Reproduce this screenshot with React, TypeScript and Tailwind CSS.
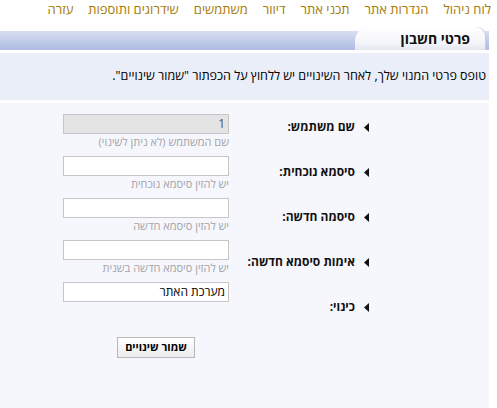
import React from 'react';

const navItems = ['לוח ניהול', 'הגדרות אתר', 'תכני אתר', 'דיוור', 'משתמשים', 'שידרוגים ותוספות', 'עזרה'];

const labels = ['שם משתמש:', 'סיסמא נוכחית:', 'סיסמה חדשה:', 'אימות סיסמא חדשה:', 'כינוי:'];

interface Field {
  value: string;
  hint?: string;
  disabled?: boolean;
}

const fields: Field[] = [
  { value: '1', hint: 'שם המשתמש (לא ניתן לשינוי)', disabled: true },
  { value: '', hint: 'יש להזין סיסמא נוכחית' },
  { value: '', hint: 'יש להזין סיסמא חדשה' },
  { value: '', hint: 'יש להזין סיסמא חדשה בשנית' },
  { value: 'מערכת האתר' },
];

const Arrow = () => (
  <svg width="5" height="9" viewBox="0 0 5 9" className="shrink-0">
    <polygon points="5,0 5,9 0,4.5" fill="#111" />
  </svg>
);

const App: React.FC = () => {
  return (
    <div dir="rtl" className="w-[497px] h-[408px] overflow-hidden bg-white font-['Open_Sans',Arial,sans-serif]">
      {/* Top menu */}
      <div className="flex h-[20px] items-center gap-[15px] pr-[6px] text-[13px] text-[#a67a06]">
        {navItems.map((item) => (
          <span key={item} className="whitespace-nowrap">{item}</span>
        ))}
      </div>

      <div className="mr-auto w-[489px]">
        {/* Page title bar */}
        <div className="mt-[7px] flex h-[23px] pr-[3px] bg-[linear-gradient(to_bottom,transparent_0,transparent_4px,#d8def2_4px,#c5cfeb_12px,#aebbe2_23px)]">
          <div className="flex w-[131px] items-center rounded-tl-[14px] rounded-tr-[9px] bg-[linear-gradient(to_bottom,#ffffff,#f4f5f9_70%,#e3e6ef)] pr-[16px] shadow-[inset_-1px_0_0_#c3cbe6]">
            <span className="text-[14px] font-bold text-[#111]">פרטי חשבון</span>
          </div>
        </div>

        {/* Intro */}
        <div className="mt-[3px] flex h-[47px] items-center bg-[#eaeef8] pr-[3px] text-[12.5px] text-black">
          טופס פרטי המנוי שלך, לאחר השינויים יש ללחוץ על הכפתור "שמור שינויים".
        </div>

        {/* Form */}
        <div className="mt-[3px] flex h-[305px] gap-[4px] bg-[#f6f7fd] pr-[120px]">
          <div className="flex w-[136px] shrink-0 flex-col gap-[27px] pt-[15px]">
            {labels.map((label) => (
              <div key={label} className="flex h-[18px] items-center gap-[9px] whitespace-nowrap">
                <Arrow />
                <span className="text-[12px] font-bold text-[#111]">{label}</span>
              </div>
            ))}
          </div>

          <div className="flex w-[166px] shrink-0 flex-col pt-[11px]">
            {fields.map((f, i) => (
              <div key={i} className="h-[42px]">
                <div
                  className={`flex h-[20px] items-center border border-[#c6c6c6] px-[3px] text-[12px] ${
                    f.disabled ? 'bg-[#e4e4e4] text-[#555]' : 'bg-white text-black'
                  }`}
                >
                  {f.value}
                </div>
                {f.hint && (
                  <div className="mt-[1px] text-[11px] leading-[14px] text-[#a3a3a8] whitespace-nowrap">{f.hint}</div>
                )}
              </div>
            ))}
            <div className="mt-[9px] pr-[34px]">
              <button className="h-[21px] w-[78px] border border-[#b9b9b9] bg-[linear-gradient(to_bottom,#ffffff,#ececec)] text-[11px] font-bold text-black">
                שמור שינויים
              </button>
            </div>
          </div>
        </div>
      </div>
    </div>
  );
};

export default App;
